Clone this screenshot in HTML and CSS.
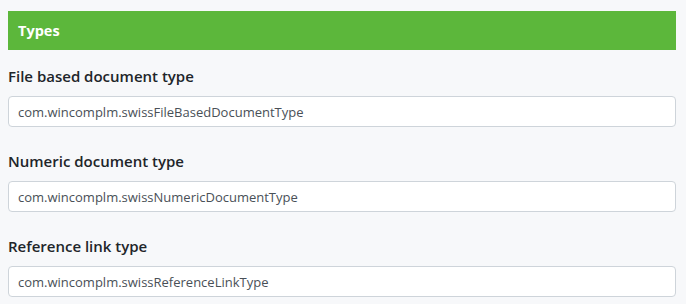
FILE: index.html
```html
<!DOCTYPE html>
<html lang="en">
<head>
    <meta charset="UTF-8">
    <meta name="viewport" content="width=device-width, initial-scale=1.0">
    <title>Types</title>
    <link rel="stylesheet" href="styles.css">
</head>
<body>
    <div class="panel">
        <div class="panel-header">Types</div>

        <div class="field">
            <label for="file-type">File based document type</label>
            <input id="file-type" type="text" value="com.wincomplm.swissFileBasedDocumentType">
        </div>

        <div class="field">
            <label for="numeric-type">Numeric document type</label>
            <input id="numeric-type" type="text" value="com.wincomplm.swissNumericDocumentType">
        </div>

        <div class="field">
            <label for="link-type">Reference link type</label>
            <input id="link-type" type="text" value="com.wincomplm.swissReferenceLinkType">
        </div>
    </div>
</body>
</html>
```

FILE: styles.css
```css
body {
    margin: 0;
    padding: 11px 10px 0 8px;
    background-color: #f7f8fa;
    font-family: "Open Sans", "Noto Sans", sans-serif;
    color: #212529;
}
.panel-header {
    height: 39px;
    line-height: 39px;
    padding: 0 10px;
    background-color: #5cb73b;
    color: white;
    font-size: 14.5px;
    font-weight: bold;
}
.field {
    margin-top: 14px;
}
.field + .field {
    margin-top: 22px;
}
.field label {
    display: block;
    font-size: 15px;
    line-height: 24px;
    font-weight: 600;
    margin-bottom: 8px;
}
.field input {
    display: block;
    box-sizing: border-box;
    width: 100%;
    height: 31px;
    margin: 0;
    padding: 0 9px;
    border: 1px solid #ced4da;
    border-radius: 4px;
    background-color: white;
    font-family: "Open Sans", "Noto Sans", sans-serif;
    font-size: 13px;
    color: #495057;
}
```
